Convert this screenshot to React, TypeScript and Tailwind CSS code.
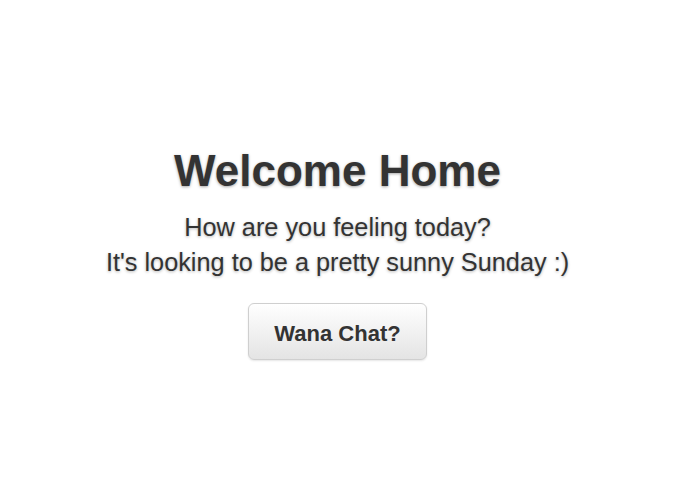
export default function App() {
  return (
    <div className="flex min-h-screen flex-col items-center bg-white pt-[147px] pr-[20px] font-['Liberation_Sans',Arial,sans-serif] text-[#333333]">
      <h1 className="text-[44px] leading-[48px] font-bold [text-shadow:0_1px_3px_rgba(0,0,0,0.35)]">
        Welcome Home
      </h1>
      <div className="mt-[15px] text-center text-[25.3px] leading-[35px] [text-shadow:0_1px_3px_rgba(0,0,0,0.3)]">
        <p>How are you feeling today?</p>
        <p>It's looking to be a pretty sunny Sunday :)</p>
      </div>
      <button className="mt-[23px] flex h-[57px] w-[179px] items-center justify-center rounded-[6px] border border-[#cfcfcf] bg-gradient-to-b from-white to-[#e4e4e4] pt-[3px] text-[22px] font-bold text-[#333333] shadow-[0_1px_2px_rgba(0,0,0,0.1)]">
        Wana Chat?
      </button>
    </div>
  );
}
